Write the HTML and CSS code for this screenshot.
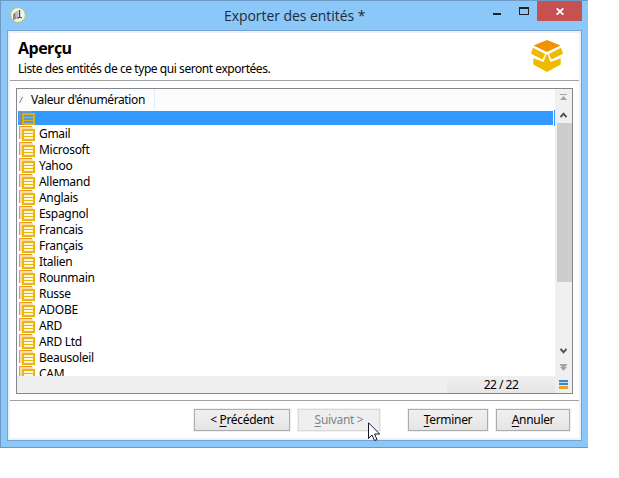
FILE: index.html
```html
<!DOCTYPE html>
<html lang="fr">
<head>
<meta charset="utf-8">
<title>Exporter des entités</title>
<link rel="stylesheet" href="styles.css">
</head>
<body>
<svg class="defs" width="0" height="0" aria-hidden="true">
  <symbol id="item" viewBox="0 0 16 16">
    <path d="M2 13V2H14" fill="none" stroke="#fbdcae" stroke-width="2"/>
    <path d="M.5 13V.5H13" fill="none" stroke="#ee9620"/>
    <path d="M3 3H16V15H3Z" fill="#ecb70b"/>
    <path d="M5 5H14V7H5ZM5 8H14V10H5ZM5 11H14V13H5Z" fill="#fff6d8"/>
  </symbol>
  <symbol id="item-sel" viewBox="0 0 16 16">
    <path d="M1.500 13V2H13" fill="none" stroke="#8e9299"/>
    <path d="M.5 13V1.5H13" fill="none" stroke="#b98c55"/>
    <path d="M3 3H16V15H3Z" fill="#d9af1c"/>
    <path d="M5 5H14V7H5ZM5 8H14V10H5ZM5 11H14V13H5Z" fill="#5b9ccb"/>
  </symbol>
</svg>
<div class="window">
  <header class="titlebar">
    <svg class="app" width="16" height="16" viewBox="0 0 16 16"><circle cx="8" cy="8" r="7.4" fill="#f5f5ef" stroke="#a9c765"/><path d="M3 7L6 5V12L3 13Z" fill="#888"/><path d="M5 5L8 3.500V11L6 12Z" fill="#bbb"/><path d="M9.500 3V10L7.500 11.500M9.500 10L12 11" fill="none" stroke="#444" stroke-width="1.300"/></svg>
    <h1>Exporter des entités *</h1>
    <div class="controls">
      <span class="min"></span><span class="max"></span>
      <span class="close"><svg width="8" height="7" viewBox="0 0 8 7"><path d="M.7.3L7.3 6.7M7.3.3L.7 6.7" stroke="#fff" stroke-width="1.8"/></svg></span>
    </div>
  </header>
  <main class="content">
    <section class="intro">
      <div><h2>Aperçu</h2><p>Liste des entités de ce type qui seront exportées.</p></div>
      <svg class="logo" width="32" height="32" viewBox="0 0 32 32"><path d="M16 0L29.500 5.500L16 12L2.500 5.500Z" fill="#ef9300"/><path d="M2 7.700L14.200 14L11.500 19.500L0 13.700ZM30 7.700L17.800 14L20.500 19.500L32 13.700Z" fill="#efba00"/><path d="M2.300 18.300L12.600 22L15.200 14.500H16.800L19.400 22L29.700 18.300V24.500L16 32L2.300 24.500Z" fill="#efba00"/></svg>
    </section>
    <section class="table">
      <div class="main">
        <div class="head"><div class="column"><svg width="5" height="8" viewBox="0 0 5 8"><path d="M.5 7L3.5 1" stroke="#777"/></svg><span>Valeur d'énumération</span></div></div>
        <ul class="rows">
          <li class="selected"><svg><use href="#item-sel"/></svg></li>
          <li><svg><use href="#item"/></svg><span>Gmail</span></li>
          <li><svg><use href="#item"/></svg><span>Microsoft</span></li>
          <li><svg><use href="#item"/></svg><span>Yahoo</span></li>
          <li><svg><use href="#item"/></svg><span>Allemand</span></li>
          <li><svg><use href="#item"/></svg><span>Anglais</span></li>
          <li><svg><use href="#item"/></svg><span>Espagnol</span></li>
          <li><svg><use href="#item"/></svg><span>Francais</span></li>
          <li><svg><use href="#item"/></svg><span>Français</span></li>
          <li><svg><use href="#item"/></svg><span>Italien</span></li>
          <li><svg><use href="#item"/></svg><span>Rounmain</span></li>
          <li><svg><use href="#item"/></svg><span>Russe</span></li>
          <li><svg><use href="#item"/></svg><span>ADOBE</span></li>
          <li><svg><use href="#item"/></svg><span>ARD</span></li>
          <li><svg><use href="#item"/></svg><span>ARD Ltd</span></li>
          <li><svg><use href="#item"/></svg><span>Beausoleil</span></li>
          <li><svg><use href="#item"/></svg><span>CAM</span></li>
        </ul>
      </div>
      <div class="scroll">
        <svg class="first" width="7" height="6" viewBox="0 0 7 6"><path d="M0 .5H7" stroke="#a5a5a5"/><path d="M3.500 2L7 6H0Z" fill="#a5a5a5"/></svg>
        <svg class="up" width="7" height="6" viewBox="0 0 7 6"><path d="M.5 5.200L3.500 1.700L6.500 5.200" fill="none" stroke="#505050" stroke-width="2"/></svg>
        <div class="track"><div class="thumb"></div></div>
        <svg class="down" width="7" height="6" viewBox="0 0 7 6"><path d="M.5.800L3.500 4.300L6.500.800" fill="none" stroke="#505050" stroke-width="2"/></svg>
        <svg class="last" width="7" height="7" viewBox="0 0 7 7"><path d="M0 0H7V1L5 3H7L3.500 7L0 3H2L0 1Z" fill="#a5a5a5"/></svg>
      </div>
      <footer class="status"><span class="count">22 / 22</span><i class="stripes"></i></footer>
    </section>
    <nav class="actions">
      <button class="prev"><span>&lt; <u>P</u>récédent</span></button>
      <button class="next" disabled><span><u>S</u>uivant &gt;</span></button>
      <button class="finish"><span><u>T</u>erminer</span></button>
      <button class="cancel"><span><u>A</u>nnuler</span></button>
    </nav>
  </main>
</div>
<svg class="cursor" width="13" height="20" viewBox="0 0 13 20"><path d="M.5.8V16.500L4 13L6.500 18.500L9 17.500L6.500 12H11.700Z" fill="#fff" stroke="#15152a"/></svg>
</body>
</html>
```
FILE: styles.css
```css
* { box-sizing: border-box; }
body { margin: 0; background: #fff; font: 12px/16px "Noto Sans", "Open Sans", sans-serif; color: #000; overflow: hidden; }
svg { display: block; flex: none; }
.defs { position: absolute; }
h1, h2, p, ul { margin: 0; padding: 0; }
.window { width: 588px; height: 448px; background: #8cc7f9; border: solid #6c9ac4; border-width: 1px 0 1px 1px; padding: 0 6px 6px; display: flex; flex-direction: column; }
.titlebar { height: 29px; flex: none; display: flex; margin-right: -6px; }
.app { margin: 6px 0 0 3px; }
h1 { font: 14px/20px "Open Sans", sans-serif; color: #222c36; margin: 5px 0 0 198px; width: 143px; white-space: nowrap; letter-spacing: -.06px; }
.controls { margin-left: auto; margin-right: 6px; display: flex; }
.min { width: 8px; height: 2px; background: #222; margin: 12px 18px 0 0; }
.max { width: 10px; height: 8px; border: 1px solid #222; border-top-width: 2px; margin: 6px 8px 0 0; }
.close { width: 45px; height: 20px; background: #c75050; display: flex; align-items: center; justify-content: center; }
.content { flex: 1; min-height: 0; width: 575px; background: #fff; border: 1px solid #75a4d2; outline: 2px solid #f0f0f0; outline-offset: -3px; padding: 2px; display: flex; flex-direction: column; }
.intro { height: 48px; flex: none; border-bottom: 1px solid #a0a0a0; padding: 5px 16px 0 8px; display: flex; justify-content: space-between; }
.logo { margin-top: 2px; }
h2 { font: bold 16px/20px "Open Sans", sans-serif; letter-spacing: -.5px; }
.intro p { margin-top: 3px; white-space: nowrap; letter-spacing: -.44px; }
.table { height: 306px; margin: 7px 6px 0 6px; border: 1px solid #828790; display: grid; grid-template-columns: 1fr 17px; grid-template-rows: 287px 17px; flex: none; }
.main { overflow: hidden; letter-spacing: -.38px; }
.head { height: 20px; background: #fcfcfc; display: flex; }
.column { width: 138px; border-right: 1px solid #e2edf8; display: flex; padding: 3px 0 0 2px; }
.column svg { margin-top: 4px; }
.column span { margin-left: 7px; white-space: nowrap; }
.rows { list-style: none; padding: 1px 0 0 1px; letter-spacing: -.3px; }
.rows li { height: 16px; display: flex; padding-left: 1px; white-space: nowrap; }
.rows svg { width: 16px; height: 16px; }
.rows span { margin-left: 4px; }
.rows .selected { background: #3399ff content-box; padding: 1px 1px 1px 0; border-right: 1px solid #3399ff; }
.selected svg { margin: -1px 0 0 1px; }
.scroll { background: #f0f0f0; display: flex; flex-direction: column; align-items: center; }
.first { margin-top: 5px; }
.up { margin-top: 12px; }
.track { width: 15px; height: 224px; margin-top: 5px; margin-left: 1px; }
.thumb { height: 159px; background: #cdcdcd; }
.down { margin-top: 1px; }
.last { margin-top: 10px; }
.status { grid-column: 1 / -1; background: #efefef; display: flex; }
.count { width: 108px; margin-left: auto; line-height: 18px; text-align: center; letter-spacing: -.5px; background: linear-gradient(#f0f0f0, #e5e5e5); }
.stripes { width: 9px; height: 9px; margin: 4px 4px 0 4px; background: linear-gradient(#3f87cd 0 2px, #b9ddf6 2px 3px, #3f87cd 3px 5px, #e5e5e5 5px 6px, #f3a01f 6px); }
.actions { margin-top: 6px; border-top: 1px solid #a0a0a0; padding: 8px 8px 0 184px; display: flex; }
button { font: inherit; letter-spacing: -.32px; color: #000; height: 22px; padding: 0; border: 1px solid #acacac; background: linear-gradient(#f0f0f0, #e5e5e5); outline: 1px solid #f0f0f0; white-space: nowrap; }
u { text-underline-offset: 2px; text-decoration-thickness: 1px; text-decoration-skip-ink: none; }
.prev { width: 96px; }
.next { width: 82px; margin-left: 8px; color: #838383; border-color: #d9d9d9; background: #efefef; }
.finish { width: 80px; margin-left: 28px; }
.cancel { width: 74px; margin-left: 8px; }
.cursor { position: absolute; left: 368px; top: 422px; }
```
